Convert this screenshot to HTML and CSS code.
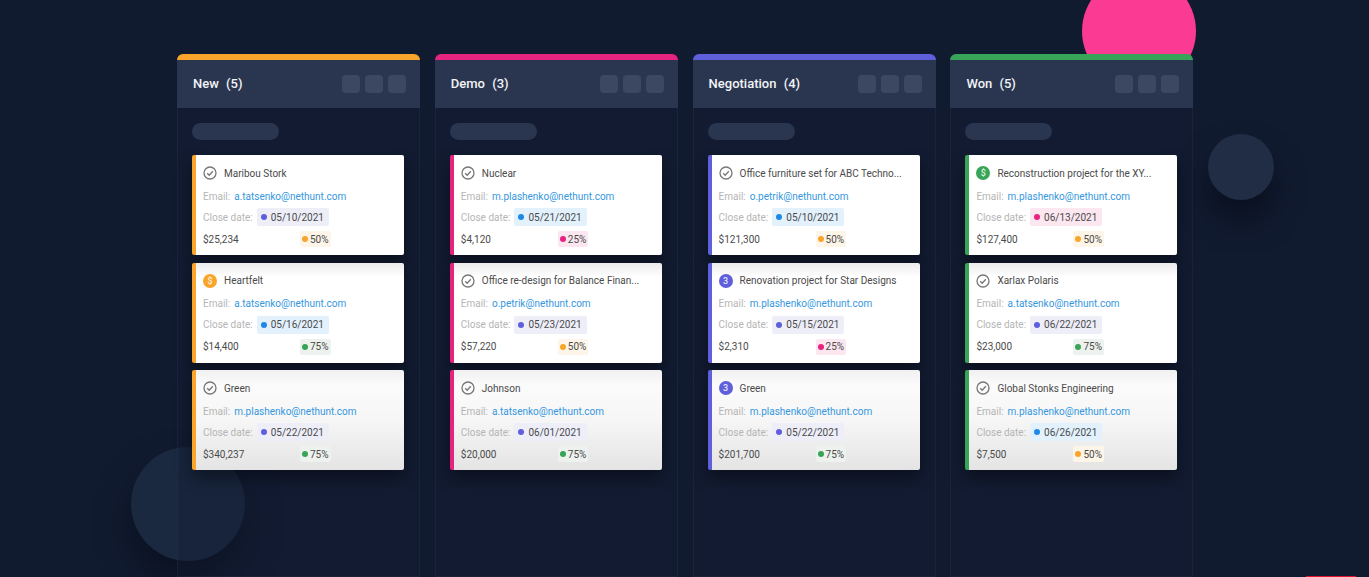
FILE: index.html
```html
<!DOCTYPE html>
<html>
<head>
    <title>Sales Pipeline</title>
    <link rel="stylesheet" href="styles.css">
</head>
<body>
    <svg class="defs" width="0" height="0">
        <symbol id="check" viewBox="0 0 14 14">
            <circle cx="7" cy="7" r="6" fill="none" stroke="#777777" stroke-width="1.3"/>
            <path d="M4.2 7.2l2 2 3.6-4" fill="none" stroke="#777777" stroke-width="1.3"/>
        </symbol>
    </svg>

    <!-- background circles -->
    <div class="circle circle-pink"></div>
    <div class="circle circle-right"></div>
    <div class="circle circle-left"></div>

    <div class="board">
        <section class="column orange">
            <header class="column-head">
                <h2>New <span class="count">(5)</span></h2>
                <div class="head-buttons"><span></span><span></span><span></span></div>
            </header>
            <div class="column-body">
                <div class="filter-pill"></div>
                <article class="card">
                    <div class="card-title"><svg class="icon"><use href="#check"/></svg>Maribou Stork</div>
                    <div class="card-row"><span class="label">Email:</span><a class="email">a.tatsenko@nethunt.com</a></div>
                    <div class="card-row"><span class="label">Close date:</span><span class="date purple"><i></i>05/10/2021</span></div>
                    <div class="card-foot"><span class="amount">$25,234</span><span class="pct amber"><i></i>50%</span></div>
                </article>
                <article class="card card-mid">
                    <div class="card-title"><span class="coin amber-coin">$</span>Heartfelt</div>
                    <div class="card-row"><span class="label">Email:</span><a class="email">a.tatsenko@nethunt.com</a></div>
                    <div class="card-row"><span class="label">Close date:</span><span class="date blue"><i></i>05/16/2021</span></div>
                    <div class="card-foot"><span class="amount">$14,400</span><span class="pct green"><i></i>75%</span></div>
                </article>
                <article class="card card-low">
                    <div class="card-title"><svg class="icon"><use href="#check"/></svg>Green</div>
                    <div class="card-row"><span class="label">Email:</span><a class="email">m.plashenko@nethunt.com</a></div>
                    <div class="card-row"><span class="label">Close date:</span><span class="date purple"><i></i>05/22/2021</span></div>
                    <div class="card-foot"><span class="amount">$340,237</span><span class="pct green"><i></i>75%</span></div>
                </article>
            </div>
        </section>

        <section class="column pink">
            <header class="column-head">
                <h2>Demo <span class="count">(3)</span></h2>
                <div class="head-buttons"><span></span><span></span><span></span></div>
            </header>
            <div class="column-body">
                <div class="filter-pill"></div>
                <article class="card">
                    <div class="card-title"><svg class="icon"><use href="#check"/></svg>Nuclear</div>
                    <div class="card-row"><span class="label">Email:</span><a class="email">m.plashenko@nethunt.com</a></div>
                    <div class="card-row"><span class="label">Close date:</span><span class="date blue"><i></i>05/21/2021</span></div>
                    <div class="card-foot"><span class="amount">$4,120</span><span class="pct rose"><i></i>25%</span></div>
                </article>
                <article class="card card-mid">
                    <div class="card-title"><svg class="icon"><use href="#check"/></svg>Office re-design for Balance Finan...</div>
                    <div class="card-row"><span class="label">Email:</span><a class="email">o.petrik@nethunt.com</a></div>
                    <div class="card-row"><span class="label">Close date:</span><span class="date purple"><i></i>05/23/2021</span></div>
                    <div class="card-foot"><span class="amount">$57,220</span><span class="pct amber"><i></i>50%</span></div>
                </article>
                <article class="card card-low">
                    <div class="card-title"><svg class="icon"><use href="#check"/></svg>Johnson</div>
                    <div class="card-row"><span class="label">Email:</span><a class="email">a.tatsenko@nethunt.com</a></div>
                    <div class="card-row"><span class="label">Close date:</span><span class="date purple"><i></i>06/01/2021</span></div>
                    <div class="card-foot"><span class="amount">$20,000</span><span class="pct green"><i></i>75%</span></div>
                </article>
            </div>
        </section>

        <section class="column violet">
            <header class="column-head">
                <h2>Negotiation <span class="count">(4)</span></h2>
                <div class="head-buttons"><span></span><span></span><span></span></div>
            </header>
            <div class="column-body">
                <div class="filter-pill"></div>
                <article class="card">
                    <div class="card-title"><svg class="icon"><use href="#check"/></svg>Office furniture set for ABC Techno...</div>
                    <div class="card-row"><span class="label">Email:</span><a class="email">o.petrik@nethunt.com</a></div>
                    <div class="card-row"><span class="label">Close date:</span><span class="date blue"><i></i>05/10/2021</span></div>
                    <div class="card-foot"><span class="amount">$121,300</span><span class="pct amber"><i></i>50%</span></div>
                </article>
                <article class="card card-mid">
                    <div class="card-title"><span class="coin violet-coin">3</span>Renovation project for Star Designs</div>
                    <div class="card-row"><span class="label">Email:</span><a class="email">m.plashenko@nethunt.com</a></div>
                    <div class="card-row"><span class="label">Close date:</span><span class="date purple"><i></i>05/15/2021</span></div>
                    <div class="card-foot"><span class="amount">$2,310</span><span class="pct rose"><i></i>25%</span></div>
                </article>
                <article class="card card-low">
                    <div class="card-title"><span class="coin violet-coin">3</span>Green</div>
                    <div class="card-row"><span class="label">Email:</span><a class="email">m.plashenko@nethunt.com</a></div>
                    <div class="card-row"><span class="label">Close date:</span><span class="date purple"><i></i>05/22/2021</span></div>
                    <div class="card-foot"><span class="amount">$201,700</span><span class="pct green"><i></i>75%</span></div>
                </article>
            </div>
        </section>

        <section class="column emerald">
            <header class="column-head">
                <h2>Won <span class="count">(5)</span></h2>
                <div class="head-buttons"><span></span><span></span><span></span></div>
            </header>
            <div class="column-body">
                <div class="filter-pill"></div>
                <article class="card">
                    <div class="card-title"><span class="coin green-coin">$</span>Reconstruction project for the XY...</div>
                    <div class="card-row"><span class="label">Email:</span><a class="email">m.plashenko@nethunt.com</a></div>
                    <div class="card-row"><span class="label">Close date:</span><span class="date rose"><i></i>06/13/2021</span></div>
                    <div class="card-foot"><span class="amount">$127,400</span><span class="pct amber"><i></i>50%</span></div>
                </article>
                <article class="card card-mid">
                    <div class="card-title"><svg class="icon"><use href="#check"/></svg>Xarlax Polaris</div>
                    <div class="card-row"><span class="label">Email:</span><a class="email">a.tatsenko@nethunt.com</a></div>
                    <div class="card-row"><span class="label">Close date:</span><span class="date purple"><i></i>06/22/2021</span></div>
                    <div class="card-foot"><span class="amount">$23,000</span><span class="pct green"><i></i>75%</span></div>
                </article>
                <article class="card card-low">
                    <div class="card-title"><svg class="icon"><use href="#check"/></svg>Global Stonks Engineering</div>
                    <div class="card-row"><span class="label">Email:</span><a class="email">m.plashenko@nethunt.com</a></div>
                    <div class="card-row"><span class="label">Close date:</span><span class="date blue"><i></i>06/26/2021</span></div>
                    <div class="card-foot"><span class="amount">$7,500</span><span class="pct amber"><i></i>50%</span></div>
                </article>
            </div>
        </section>
    </div>

    <div class="progress-mark"></div>
</body>
</html>
```

FILE: styles.css
```css
html, body {
    margin: 0;
    height: 100%;
}

body {
    position: relative;
    overflow: hidden;
    background-color: #111b30;
    font-family: Roboto, "Liberation Sans", sans-serif;
    font-size: 10px;
    color: #4a4a4a;
}

.defs {
    position: absolute;
}

/* Background circles */
.circle {
    position: absolute;
    border-radius: 50%;
}

.circle-pink {
    left: 1082px;
    top: -26px;
    width: 114px;
    height: 114px;
    background-color: #fb3a94;
}

.circle-right {
    left: 1208px;
    top: 134px;
    width: 66px;
    height: 66px;
    background-color: #212d45;
    box-shadow: 0 20px 30px rgba(5, 10, 20, 0.6);
}

.circle-left {
    left: 131px;
    top: 447px;
    width: 114px;
    height: 114px;
    background-color: #1a2840;
    box-shadow: 0 20px 34px rgba(5, 10, 20, 0.55);
}

/* Board */
.board {
    position: relative;
    display: grid;
    grid-template-columns: repeat(4, 243px);
    column-gap: 14.8px;
    height: 100%;
    box-sizing: border-box;
    padding: 54px 0 0 177px;
}

.column {
    display: flex;
    flex-direction: column;
    min-height: 0;
}

.column-head {
    display: flex;
    align-items: center;
    justify-content: space-between;
    height: 48px;
    padding: 0 14px 0 16px;
    border-top: 6px solid #f9a52b;
    border-radius: 6px 6px 0 0;
    background-color: #2a3650;
}

.column.orange .column-head { border-top-color: #f9a52b; }
.column.pink .column-head { border-top-color: #e6237f; }
.column.violet .column-head { border-top-color: #5f5fdc; }
.column.emerald .column-head { border-top-color: #38a457; }

.column-head h2 {
    margin: 0 0 2px;
    font-size: 13px;
    font-weight: 500;
    color: #f2f4f7;
}

.count {
    margin-left: 4px;
}

.head-buttons {
    display: flex;
    gap: 5px;
}

.head-buttons span {
    width: 18px;
    height: 18px;
    border-radius: 4px;
    background-color: #3c4861;
}

.column-body {
    flex: 1;
    display: flex;
    flex-direction: column;
    gap: 7.5px;
    padding: 15px 14px 0;
    border: 1px solid rgba(255, 255, 255, 0.04);
    border-top: 0;
    background-color: rgba(19, 30, 52, 0.35);
}

.filter-pill {
    width: 87px;
    height: 17px;
    margin-bottom: 7.5px;
    border-radius: 9px;
    background-color: #2a3650;
}

/* Cards */
.card {
    display: flex;
    flex-direction: column;
    box-sizing: border-box;
    width: 212px;
    height: 100px;
    padding: 10px 10px 0 7px;
    border-left: 4px solid #f9a52b;
    border-radius: 2px;
    background-color: #ffffff;
    box-shadow: 0 8px 16px rgba(0, 0, 0, 0.4);
}

.column.orange .card { border-left-color: #f9a52b; }
.column.pink .card { border-left-color: #e6237f; }
.column.violet .card { border-left-color: #5f5fdc; }
.column.emerald .card { border-left-color: #38a457; }

.card-mid {
    background: linear-gradient(#ececec, #ffffff 14%);
}

.card-low {
    background: linear-gradient(#f0f0f0, #fbfbfb 15%, #f6f6f6 50%, #e4e4e4);
}

.card-title {
    display: flex;
    align-items: center;
    gap: 7px;
    height: 16px;
    white-space: nowrap;
}

.icon {
    flex: none;
    width: 14px;
    height: 14px;
}

.coin {
    flex: none;
    width: 14px;
    height: 14px;
    border-radius: 50%;
    font-size: 9px;
    font-weight: 500;
    line-height: 14px;
    text-align: center;
    color: rgba(255, 255, 255, 0.85);
}

.amber-coin { background-color: #f9a52b; }
.violet-coin { background-color: #5f5fdc; }
.green-coin { background-color: #38a457; }

.card-row {
    display: flex;
    align-items: center;
    gap: 4px;
    height: 16px;
    margin-top: 7px;
}

.card-row + .card-row {
    gap: 4px;
    height: 18px;
    margin-top: 4px;
}

.label {
    color: #b5b5b5;
}

.email {
    color: #3497e0;
}

.date {
    display: flex;
    align-items: center;
    gap: 4px;
    height: 18px;
    padding: 0 5px 0 4px;
    border-radius: 2px;
    color: #4a4a4a;
}

.date i, .pct i {
    width: 6px;
    height: 6px;
    border-radius: 50%;
}

.date.purple { background-color: #eeeef9; }
.date.blue { background-color: #e2f1fc; }
.date.rose { background-color: #fce6f0; }

.date.purple i { background-color: #5f5fdc; }
.date.blue i { background-color: #1e88e5; }
.date.rose i { background-color: #e6237f; }

.card-foot {
    display: flex;
    align-items: center;
    height: 16px;
    margin-top: 5px;
}

.amount {
    width: 97px;
}

.pct {
    display: flex;
    align-items: center;
    gap: 2px;
    height: 16px;
    padding: 0 2px;
    border-radius: 2px;
}

.pct.amber { background-color: #fdf5e8; }
.pct.green { background-color: #edf2ee; }
.pct.rose { background-color: #fce6f0; }

.pct.amber i { background-color: #f9a52b; }
.pct.green i { background-color: #38a457; }
.pct.rose i { background-color: #e6237f; }

.progress-mark {
    position: absolute;
    left: 1306px;
    bottom: 0;
    width: 50px;
    height: 1px;
    background-color: #e0142e;
}
```
